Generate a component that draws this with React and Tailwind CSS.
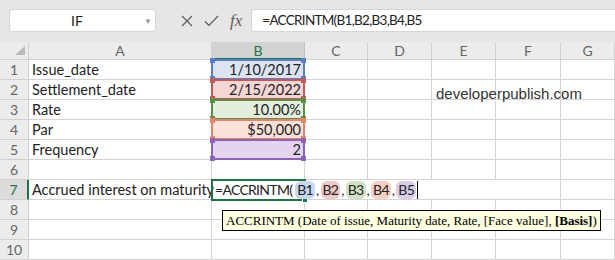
import React from 'react'

const cellFont = { fontFamily: 'Lato, "Liberation Sans", sans-serif' }

const ranges = {
	1: { label: 'Issue_date', value: '1/10/2017', fill: 'bg-[#dce4f4]', line: 'border-[#5a7ec6]', dot: 'bg-[#5a7ec6]' },
	2: { label: 'Settlement_date', value: '2/15/2022', fill: 'bg-[#f5d6d4]', line: 'border-[#c25b58]', dot: 'bg-[#c25b58]' },
	3: { label: 'Rate', value: '10.00%', fill: 'bg-[#e3eedd]', line: 'border-[#5e8c4c]', dot: 'bg-[#5e8c4c]' },
	4: { label: 'Par', value: '$50,000', fill: 'bg-[#fbe1d7]', line: 'border-[#e3866c]', dot: 'bg-[#e3866c]' },
	5: { label: 'Frequency', value: '2', fill: 'bg-[#e3d5ef]', line: 'border-[#8d63b4]', dot: 'bg-[#8d63b4]' },
}

const pills = [
	{ ref: 'B1', bg: 'bg-[#c9d6f0]' },
	{ ref: 'B2', bg: 'bg-[#f1cac8]' },
	{ ref: 'B3', bg: 'bg-[#cfe2c6]' },
	{ ref: 'B4', bg: 'bg-[#f6d0c4]' },
	{ ref: 'B5', bg: 'bg-[#dbcdea]' },
]

const letters = ['C', 'D', 'E', 'F', 'G']

function Handles({ dot }) {
	return (
		<>
			<span className={`absolute -left-[3px] -top-[3px] h-[5px] w-[5px] ${dot}`} />
			<span className={`absolute -right-[3px] -top-[3px] h-[5px] w-[5px] ${dot}`} />
			<span className={`absolute -bottom-[3px] -left-[3px] h-[5px] w-[5px] ${dot}`} />
			<span className={`absolute -bottom-[3px] -right-[3px] h-[5px] w-[5px] ${dot}`} />
		</>
	)
}

function FormulaCell() {
	return (
		<div className="relative z-20 flex items-end border-b border-r border-[#d4d4d4] pl-[3px] text-[14px] leading-[18px] tracking-[-0.7px] text-[#222]">
			<div className="absolute -left-px -top-px bottom-[-2px] right-[-2px] border-2 border-[#217346]" />
			<span className="absolute -bottom-[4px] -right-[4px] h-[6px] w-[6px] border border-white bg-[#217346]" />
			<div className="relative flex items-center whitespace-nowrap">
				<span>=ACCRINTM(</span>
				{pills.map((p, i) => (
					<React.Fragment key={p.ref}>
						<span className={`${i === 0 ? 'ml-[3px]' : 'ml-[2px]'} rounded-[6px] px-[2px] ${p.bg}`}>{p.ref}</span>
						{i < pills.length - 1 && <span className="ml-[1px]">,</span>}
					</React.Fragment>
				))}
				<span className="ml-[1px] h-[18px] w-px bg-black" />
			</div>
		</div>
	)
}

export default function App() {
	const rows = [1, 2, 3, 4, 5, 6, 7, 8, 9, 10]
	return (
		<div className="relative h-[260px] w-[615px] overflow-hidden bg-white" style={cellFont}>
			{/* formula bar */}
			<div className="flex h-[42px] items-start bg-[#e6e6e6] pt-[9px]">
				<div className="ml-[9px] flex h-[23px] w-[147px] items-center rounded-[3px] border border-[#d6d6d6] bg-white">
					<span className="flex-1 text-center text-[14px] text-[#222]">IF</span>
					<span className="mr-[3px] text-[8px] text-[#9a9a9a]">▼</span>
				</div>
				<div className="ml-[25px] flex h-[23px] items-center gap-[11px] text-[#5c5c5c]">
					<svg width="12" height="12" viewBox="0 0 12 12" className="mt-px">
						<path d="M1 1 L11 11 M11 1 L1 11" stroke="#5c5c5c" strokeWidth="1.2" fill="none" />
					</svg>
					<svg width="15" height="12" viewBox="0 0 15 12" className="mt-px">
						<path d="M1 6.5 L5 10.5 L14 1" stroke="#5c5c5c" strokeWidth="1.2" fill="none" />
					</svg>
					<span className="text-[17px] italic leading-none" style={{ fontFamily: '"Liberation Serif", serif' }}>
						fx
					</span>
				</div>
				<div className="ml-[9px] flex h-[23px] flex-1 items-center rounded-l-[3px] border border-r-0 border-[#d6d6d6] bg-white pl-[10px] text-[13.5px] tracking-[-0.7px] text-[#222]">
					=ACCRINTM(B1,B2,B3,B4,B5
				</div>
			</div>

			{/* sheet grid */}
			<div className="grid grid-cols-[29px_183px_93px_63px_64px_64px_65px_54px] grid-rows-[18px_repeat(10,20px)]">
				<div className="relative border-b border-r border-[#d0d0d0] bg-[#ececec]">
					<svg width="10" height="9" viewBox="0 0 10 9" className="absolute bottom-[4px] right-[3px]">
						<polygon points="10,0 10,9 0,9" fill="#b9b9b9" />
					</svg>
				</div>
				<div className="flex items-center justify-center border-b border-r border-[#d0d0d0] bg-[#ececec] text-[14px] text-[#666]">A</div>
				<div className="flex items-center justify-center border-b-2 border-r border-b-[#217346] border-r-[#c4c4c4] bg-[#d3d3d3] text-[14px] text-[#217346]">B</div>
				{letters.map(l => (
					<div key={l} className="flex items-center justify-center border-b border-r border-[#d0d0d0] bg-[#ececec] text-[14px] text-[#666]">
						{l}
					</div>
				))}

				{rows.map(r => {
					const data = ranges[r]
					const active = r === 7
					return (
						<React.Fragment key={r}>
							<div
								className={`flex items-center justify-center border-b border-[#d0d0d0] text-[14px] ${
									active
										? 'border-r-2 border-r-[#217346] bg-[#dcdcdc] text-[#217346]'
										: 'border-r border-r-[#d0d0d0] bg-[#ececec] text-[#666]'
								}`}
							>
								{r}
							</div>
							<div className="flex items-end whitespace-nowrap border-b border-r border-[#d4d4d4] pl-[3px] text-[14.5px] leading-[18px] text-[#222]">
								{data?.label}
								{active && 'Accrued interest on maturity'}
							</div>
							{data ? (
								<div className={`relative flex items-end justify-end border-b border-r border-[#d4d4d4] pr-[3px] text-[14.5px] leading-[18px] text-[#222] ${data.fill}`}>
									<div className={`absolute -left-px -top-px bottom-[-1px] right-[-1px] z-10 border-2 ${data.line}`}>
										<Handles dot={data.dot} />
									</div>
									<span className="relative z-10">{data.value}</span>
								</div>
							) : active ? (
								<FormulaCell />
							) : (
								<div className="border-b border-r border-[#d4d4d4]" />
							)}
							{letters.map(l => (
								<div
									key={l}
									className={`border-b border-[#d4d4d4] ${active && l !== 'F' && l !== 'G' ? '' : 'border-r'}`}
								/>
							))}
						</React.Fragment>
					)
				})}
			</div>

			{/* text box */}
			<div className="absolute left-[436px] top-[83px] text-[15px] text-[#333]" style={{ fontFamily: '"Liberation Sans", sans-serif' }}>
				developerpublish.com
			</div>

			{/* function tooltip */}
			<div
				className="absolute left-[222px] top-[210px] z-30 whitespace-nowrap border border-black bg-[#ffffe1] px-[3px] text-[13px] leading-[19px] text-black"
				style={{ fontFamily: '"Liberation Serif", serif' }}
			>
				ACCRINTM (Date of issue, Maturity date, Rate, [Face value], <b>[Basis]</b>)
			</div>
		</div>
	)
}
